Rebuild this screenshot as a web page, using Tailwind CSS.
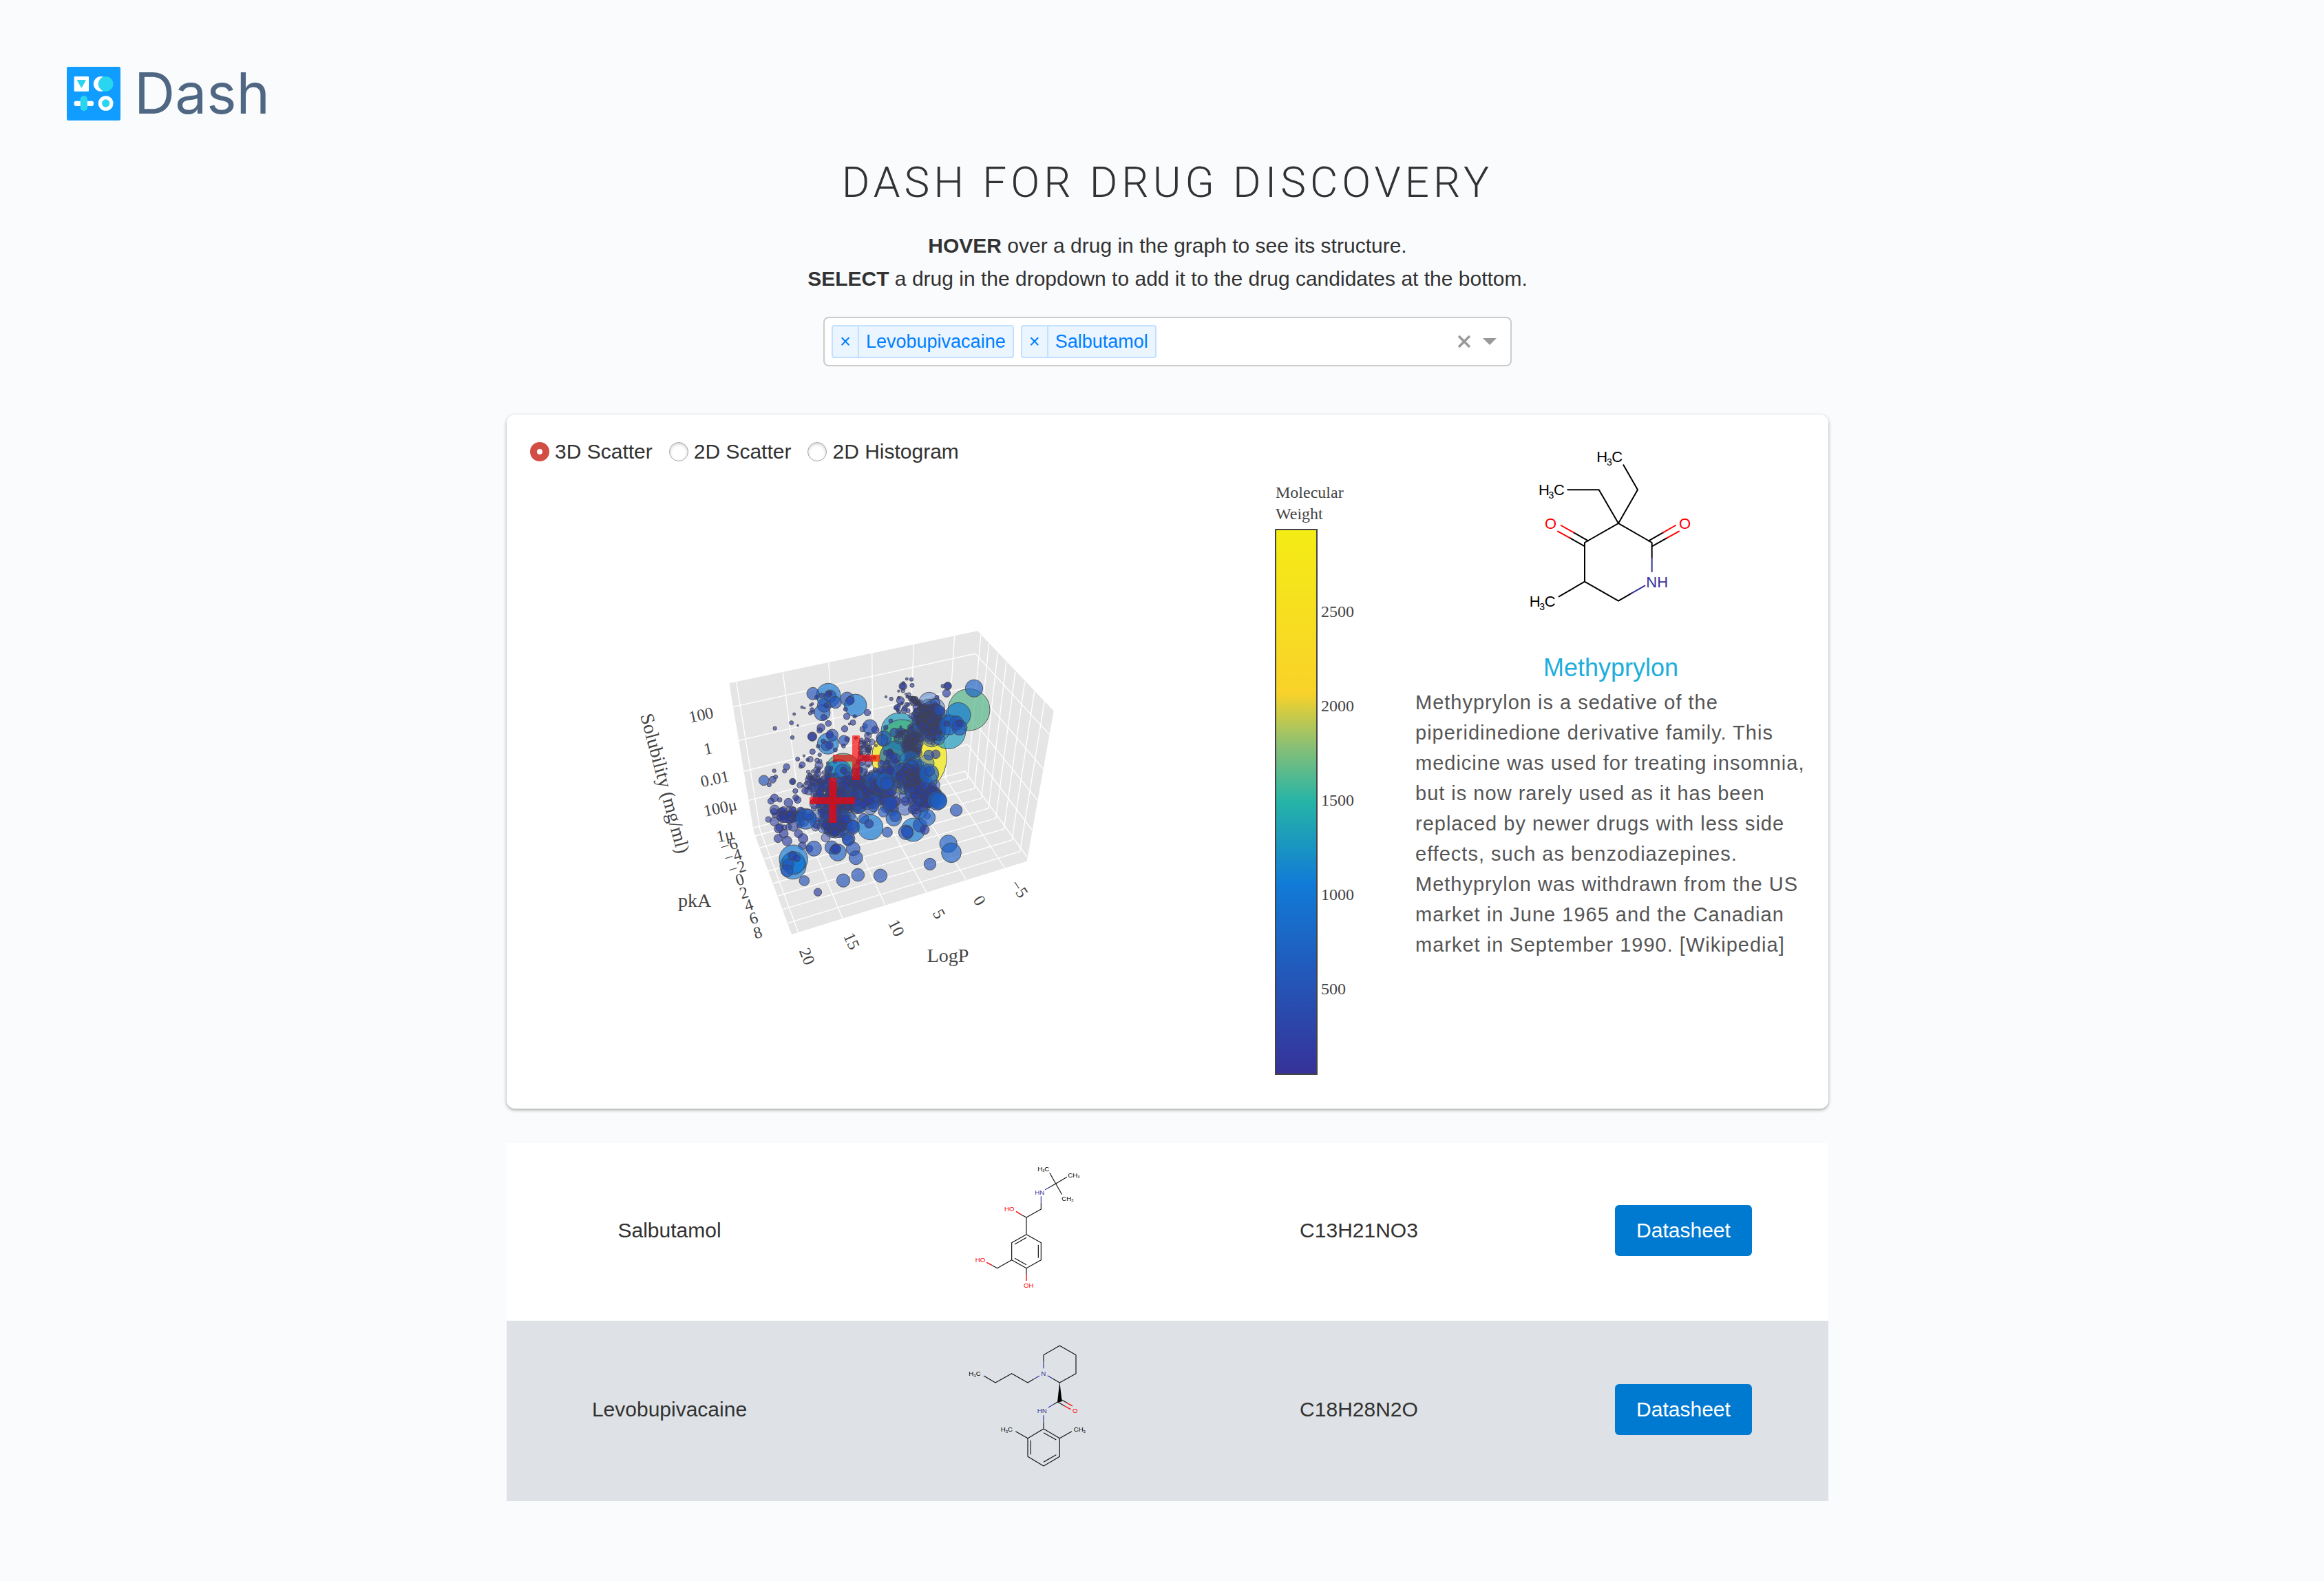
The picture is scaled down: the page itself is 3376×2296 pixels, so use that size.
<!DOCTYPE html>
<html lang="en">
<head>
<meta charset="utf-8">
<meta name="viewport" content="width=device-width, initial-scale=1">
<title>Dash for Drug Discovery</title>
<script src="https://cdn.jsdelivr.net/npm/@tailwindcss/browser@4"></script>
</head>
<body class="min-h-screen bg-[#f9fbfd] pb-28 font-['Liberation_Sans',Arial,sans-serif] text-[30px] leading-[48px] text-[#323232]">

<header class="flex h-[175px] items-end px-[97px]">
  <a href="#" class="flex items-center gap-5" aria-label="Dash home">
    <svg class="h-[78px] w-[78px]" viewBox="51 51 234 234" aria-hidden="true">
      <rect x="51" y="51" width="234" height="234" rx="7" fill="#119dff"/>
      <rect x="83" y="93" width="64" height="65" rx="3" fill="#fff"/>
      <path d="M98 110h34l-17 30z" fill="#2ad5f0" stroke="#2ad5f0" stroke-width="4" stroke-linejoin="round"/>
      <circle cx="200" cy="125.500" r="32.500" fill="#fff"/>
      <circle cx="221" cy="125.500" r="32.500" fill="#2ad5f0"/>
      <rect x="83" y="200" width="85" height="22" rx="8" fill="#fff"/>
      <rect x="110" y="178" width="31" height="65" rx="15" fill="#2ad5f0"/>
      <circle cx="221" cy="210" r="32.500" fill="#fff"/>
      <circle cx="221" cy="210" r="17" fill="#2ad5f0"/>
    </svg>
    <span class="font-[Inter,sans-serif] text-[82px] leading-[78px] text-[#506784]">Dash</span>
  </a>
</header>

<main class="mx-auto w-full max-w-[1936px] pl-4">
  <section class="mt-[50px] text-center">
    <h1 class="font-[Roboto,sans-serif] text-[62px] font-light leading-[80px] tracking-[6px]">DASH FOR DRUG DISCOVERY</h1>
    <p class="mt-7"><strong>HOVER</strong> over a drug in the graph to see its structure.<br><strong>SELECT</strong> a drug in the dropdown to add it to the drug candidates at the bottom.</p>
    <div class="mx-auto mt-[31px] flex h-[72px] w-full max-w-[1000px] items-center rounded-lg border-2 border-[#ccc] bg-white pl-[10px] pr-5 text-[27px]">
      <div class="flex gap-[10px] text-[#007eff]">
        <span class="flex h-[48px] items-center rounded-sm border-2 border-[#c2e0ff] bg-[#ebf5ff]">
          <button type="button" aria-label="Remove Levobupivacaine" class="h-full w-[38px] border-r-2 border-[#c2e0ff] leading-[40px]">×</button><span class="px-[10px]">Levobupivacaine</span>
        </span>
        <span class="flex h-[48px] items-center rounded-sm border-2 border-[#c2e0ff] bg-[#ebf5ff]">
          <button type="button" aria-label="Remove Salbutamol" class="h-full w-[38px] border-r-2 border-[#c2e0ff] leading-[40px]">×</button><span class="px-[10px]">Salbutamol</span>
        </span>
      </div>
      <input type="text" aria-label="Add a drug candidate" class="h-full min-w-0 flex-1 bg-transparent px-3 outline-none">
      <button type="button" aria-label="Clear all" class="mr-[18px]"><svg class="h-[18px] w-[18px]" viewBox="0 0 18 18"><path d="M1 1l16 16M17 1L1 17" stroke="#999" stroke-width="3.500"/></svg></button>
      <button type="button" aria-label="Open list"><svg class="h-[10px] w-[20px]" viewBox="0 0 20 10"><path d="M0 0h20L10 10z" fill="#999"/></svg></button>
    </div>
  </section>

  <section class="mt-[70px] flex rounded-xl bg-white pb-5 pl-[34px] pr-8 pt-[28px] shadow-[0_2px_5px_rgba(0,0,0,0.35)]">
    <div class="mr-[46px] min-w-0 flex-1">
      <div role="radiogroup" aria-label="Chart type" class="mt-[2px] flex gap-6">
        <label class="flex items-center gap-2"><input type="radio" name="chart" checked class="h-7 w-7 appearance-none rounded-full border border-[#aaa] bg-white checked:border-[10px] checked:border-[#d24d43]">3D Scatter</label>
        <label class="flex items-center gap-2"><input type="radio" name="chart" class="h-7 w-7 appearance-none rounded-full border border-[#a4a4a4] bg-white shadow-[inset_0_2px_4px_rgba(0,0,0,0.18)]">2D Scatter</label>
        <label class="flex items-center gap-2"><input type="radio" name="chart" class="h-7 w-7 appearance-none rounded-full border border-[#a4a4a4] bg-white shadow-[inset_0_2px_4px_rgba(0,0,0,0.18)]">2D Histogram</label>
      </div>
      <svg class="mt-[10px] h-auto w-full font-['Liberation_Serif',serif]" viewBox="770 690 1240 900" fill="#444" font-size="24" role="img" aria-label="3D scatter of LogP, pkA and Solubility coloured by molecular weight">
        <defs>
          <linearGradient id="weight" x1="0" y1="0" x2="0" y2="1">
            <stop offset="0" stop-color="rgb(244,236,21)"/><stop offset=".3" stop-color="rgb(249,210,41)"/><stop offset=".4" stop-color="rgb(134,191,118)"/><stop offset=".5" stop-color="rgb(37,180,167)"/><stop offset=".65" stop-color="rgb(17,123,215)"/><stop offset="1" stop-color="rgb(54,50,153)"/>
          </linearGradient>
        </defs>
        <g transform="translate(1080 900) scale(.33333)">
          <path fill="#e5e5e5" d="M-62 277L1020 49L1352 397L1235 1052L210 1371L45 925z"/>
          <g fill="none" stroke="#fff" stroke-width="4">
            <path d="M-31 271L72 915L238 1360M172 229L250 865L432 1302M371 187L421 820L617 1242M560 147L568 772L797 1187M742 108L717 730L970 1132M920 70L880 690L1138 1080"/>
            <path d="M-47 380L1010 148L1333 500M-22 527L1000 290L1307 650M2 660L987 422L1280 785M23 787L977 543L1257 915M43 907L965 660L1235 1032"/>
            <path d="M50 942L977 692L1035 65M70 994L1007 735L1070 103M88 1043L1037 778L1108 145M108 1095L1068 822L1146 184M128 1149L1100 865L1185 228M150 1203L1135 912L1226 270M172 1262L1170 960L1268 312M195 1321L1205 1010L1312 355"/>
          </g>
          <g id="drugs" stroke="#444" stroke-width="2.500"></g>
          <g fill="#ff0000" fill-opacity=".65">
            <path d="M474 508q0-4 4-4h25q4 0 4 4v80h82q4 0 4 4v22q0 4-4 4h-82v77q0 4-4 4h-25q-4 0-4-4v-77h-80q-4 0-4-4v-22q0-4 4-4h80z"/>
            <path fill-opacity=".7" d="M372 693q0-4 4-4h26q4 0 4 4v80h76q4 0 4 4v22q0 4-4 4h-76v78q0 4-4 4h-26q-4 0-4-4v-78h-80q-4 0-4-4v-22q0-4 4-4h80z"/>
          </g>
        </g>
        <g text-anchor="middle">
          <g>
            <text transform="translate(1020 1046) rotate(-12)">100</text>
            <text transform="translate(1030 1095) rotate(-12)">1</text>
            <text transform="translate(1040 1139) rotate(-12)">0.01</text>
            <text transform="translate(1048 1181) rotate(-12)">100μ</text>
            <text transform="translate(1055 1221) rotate(-12)">1μ</text>
            <text transform="translate(1061 1235) rotate(-17)">−6</text>
            <text transform="translate(1067 1251) rotate(-17)">−4</text>
            <text transform="translate(1073 1268) rotate(-17)">−2</text>
            <text transform="translate(1077 1285) rotate(-17)">0</text>
            <text transform="translate(1083 1304) rotate(-17)">2</text>
            <text transform="translate(1090 1322) rotate(-17)">4</text>
            <text transform="translate(1097 1341) rotate(-17)">6</text>
            <text transform="translate(1103 1362) rotate(-17)">8</text>
            <text transform="translate(1165 1392) rotate(68)">20</text>
            <text transform="translate(1230 1370) rotate(66)">15</text>
            <text transform="translate(1295 1351) rotate(64)">10</text>
            <text transform="translate(1357 1331) rotate(62)">5</text>
            <text transform="translate(1416 1312) rotate(59)">0</text>
            <text transform="translate(1474 1295) rotate(56)">−5</text>
          </g>
          <g font-size="28">
            <text transform="translate(957 1140) rotate(75)">Solubility (mg/ml)</text>
            <text x="1009" y="1317">pkA</text>
            <text x="1377" y="1397">LogP</text>
          </g>
        </g>
        <text x="1853" y="723">Molecular</text><text x="1853" y="754">Weight</text>
        <rect x="1853" y="769" width="60" height="791" fill="url(#weight)" stroke="#444" stroke-width="2"/>
        <text x="1919" y="896">2500</text><text x="1919" y="1033">2000</text><text x="1919" y="1170">1500</text><text x="1919" y="1307">1000</text><text x="1919" y="1444">500</text>
      </svg>
    </div>

    <article class="w-[568px] shrink-0">
      <svg class="mx-auto h-[316px] w-[360px]" viewBox="0 0 1080 948" role="img" aria-label="Structure of Methyprylon" font-size="66">
        <g fill="none" stroke="#000" stroke-width="6" stroke-linecap="round" stroke-linejoin="round">
          <path d="M595 136L657 244L573 390L488 244H352M573 390L719 474V540M573 390L426 474V644L573 728L630 695M426 644L314 709"/>
          <path d="M441 466L378 430M426 490L362 454M705 466L768 430M720 490L784 454"/>
          <path stroke="#f00" d="M378 430L323 399M362 454L309 425M768 430L822 399M784 454L837 425"/>
          <path stroke="#333399" d="M719 540V601M630 695L688 662"/>
        </g>
        <text x="478" y="122">H<tspan font-size="42" dy="15" dx="-4">3</tspan><tspan dy="-15" dx="-1">C</tspan></text>
        <text x="225" y="268">H<tspan font-size="42" dy="15" dx="-4">3</tspan><tspan dy="-15" dx="-1">C</tspan></text>
        <text x="185" y="753">H<tspan font-size="42" dy="15" dx="-4">3</tspan><tspan dy="-15" dx="-1">C</tspan></text>
        <g fill="#f00" text-anchor="middle"><text x="278" y="413">O</text><text x="863" y="413">O</text></g>
        <text x="694" y="668" fill="#333399">NH</text>
      </svg>
      <h2 class="text-center text-[36px]"><a href="#" class="text-[#1eaedb]">Methyprylon</a></h2>
      <p class="mt-1 text-[29px] leading-[44px] tracking-[1px] text-[#555]">Methyprylon is a sedative of the piperidinedione derivative family. This medicine was used for treating insomnia, but is now rarely used as it has been replaced by newer drugs with less side effects, such as benzodiazepines. Methyprylon was withdrawn from the US market in June 1965 and the Canadian market in September 1990. [Wikipedia]</p>
    </article>
  </section>

  <table class="mt-[50px] w-full table-fixed text-center">
    <colgroup><col class="w-[473px]"><col class="w-[504px]"><col class="w-[522px]"><col class="w-[421px]"></colgroup>
    <tbody>
      <tr class="h-[258px] bg-white">
        <td class="pb-1">Salbutamol</td>
        <td>
          <svg class="mx-auto h-[218px] w-[280px]" viewBox="-177 0 840 654" role="img" aria-label="Structure of Salbutamol" font-size="29">
            <g fill="none" stroke="#111" stroke-width="3.500" stroke-linejoin="round">
              <path d="M434 69L461 117L488 164M461 117L510 88M461 117L436 131M397 200V228L333 264L309 251M333 264V338L397 374V449L333 485L269 449V374L333 338M385 383V440M282 381L333 352M282 442L333 470M269 449L206 485L184 473M333 485V512"/>
              <path stroke="#333399" d="M436 131L414 143M397 172V200"/>
              <path stroke="#e00" stroke-width="4" d="M309 251L288 238M184 473L160 460M333 512V540"/>
            </g>
            <text x="382" y="63">H<tspan font-size="16" dy="4">3</tspan><tspan dy="-4">C</tspan></text>
            <text x="514" y="90">CH<tspan font-size="16" dy="4">3</tspan></text>
            <text x="487" y="192">CH<tspan font-size="16" dy="4">3</tspan></text>
            <text x="370" y="165" fill="#333399">HN</text>
            <g fill="#f00"><text x="237" y="238">HO</text><text x="110" y="460">HO</text><text x="321" y="570">OH</text></g>
          </svg>
        </td>
        <td class="pb-1">C13H21NO3</td>
        <td class="pb-1"><a href="#" class="inline-block rounded-md bg-[#007ad1] px-[31px] py-[13px] text-white">Datasheet</a></td>
      </tr>
      <tr class="h-[262px] bg-[#dee2e6]">
        <td class="pb-1">Levobupivacaine</td>
        <td>
          <svg class="mx-auto h-[218px] w-[280px]" viewBox="-177 0 840 654" role="img" aria-label="Structure of Levobupivacaine" font-size="29">
            <g fill="none" stroke="#111" stroke-width="3.500" stroke-linejoin="round">
              <path d="M147 174L198 204L269 164L339 204L364 189M408 112V83L478 43L549 83V164L478 204L447 186M478 283L454 297M486 278L510 292M470 288L500 306M408 377V405L478 446V526L408 567L339 526V446L408 405M352 455V517M408 422L463 453M408 550L463 518M339 446L286 416M478 446L531 416"/>
              <path fill="#000" stroke="none" d="M478 200L488 286L468 290z"/>
              <path stroke="#333399" d="M364 189L390 174M408 142V112M447 186L425 173M454 297L429 312M408 346V377"/>
              <path stroke="#f00" stroke-width="4" d="M510 292L534 306M500 306L526 320"/>
            </g>
            <text x="82" y="174">H<tspan font-size="18" dy="6">3</tspan><tspan dy="-6">C</tspan></text>
            <text x="221" y="417">H<tspan font-size="18" dy="6">3</tspan><tspan dy="-6">C</tspan></text>
            <text x="539" y="417">CH<tspan font-size="18" dy="6">3</tspan></text>
            <g fill="#333399"><text x="397" y="174">N</text><text x="380" y="336">HN</text></g>
            <text x="534" y="336" fill="#f00">O</text>
          </svg>
        </td>
        <td class="pb-1">C18H28N2O</td>
        <td class="pb-1"><a href="#" class="inline-block rounded-md bg-[#007ad1] px-[31px] py-[13px] text-white">Datasheet</a></td>
      </tr>
    </tbody>
  </table>
</main>

<script>
(function () {
  var layer = document.getElementById('drugs');
  function dot(x, y, r, color, alpha) {
    var c = document.createElementNS('http://www.w3.org/2000/svg', 'circle');
    c.setAttribute('cx', x.toFixed(1));
    c.setAttribute('cy', y.toFixed(1));
    c.setAttribute('r', r.toFixed(1));
    c.setAttribute('fill', color);
    c.setAttribute('fill-opacity', alpha);
    layer.appendChild(c);
  }
  // colour follows weight, and so does the marker size
  function shade(r) {
    if (r < 22) return '#2c3ca4';
    if (r < 34) return '#2350b8';
    if (r < 46) return '#1c60c6';
    return '#1176d4';
  }
  [[723,600,163,'#f4ec15'],[983,392,91,'#5cb98d'],[680,485,80,'#259fc0'],[690,525,90,'#42b48c'],[893,488,75,'#259fc0'],
   [435,660,78,'#42b48c'],[665,600,72,'#1f6fae'],[415,665,56,'#117bd7']].forEach(function (d) { dot(d[0], d[1], d[2], d[3], 0.72); });

  var seed = 7;
  function rnd() { seed = (seed * 16807) % 2147483647; return seed / 2147483647; }
  function gauss() { return (rnd() + rnd() + rnd() - 1.5) * 1.35; }
  // x, y, spread x, spread y, smallest and largest radius, count, slant, fill opacity
  [[330,690,48,46,7,20,70,0,0.55],[520,735,84,50,10,34,150,0,0.5],[400,790,68,60,10,30,130,0,0.5],[535,560,26,56,6,16,45,0,0.55],
   [220,862,66,32,11,23,48,0,0.6],[385,890,46,34,16,46,60,0,0.45],[612,715,44,40,12,42,36,0,0.5],[610,800,80,26,18,32,22,0,0.6],
   [812,450,34,48,6,50,190,0,0.4],[765,370,40,12,4,12,90,2.6,0.5],[738,550,24,54,6,20,130,0,0.45],[735,690,38,40,8,48,140,0,0.4],
   [795,775,50,50,14,40,60,0,0.5],[690,490,24,22,5,20,14,0,0.6],[645,620,34,40,10,28,14,0,0.5],[700,385,40,20,5,14,14,0,0.6],
   [715,515,30,20,8,20,30,0,0.25],[790,420,36,30,4,14,90,0,0.5]
  ].forEach(function (k) {
    var dots = [];
    for (var i = 0; i < k[6]; i++) {
      var gx = gauss(), t = rnd();
      dots.push([k[0] + gx * k[2], k[1] + (gauss() + gx * k[7]) * k[3], k[4] + (k[5] - k[4]) * t * t]);
    }
    dots.sort(function (a, b) { return b[2] - a[2]; });
    dots.forEach(function (d) { dot(d[0], d[1], d[2], shade(d[2]), k[8]); });
  });

  [[370,330,53],[303,322,27],[343,405,35],[352,373,30],[378,333,27],[401,360,26],[452,345,30],[488,373,49],[465,352,18],[370,325,14],[341,330,11],[378,320,9],[319,338,9],[361,373,10],
   [300,367,6],[255,381,6],[266,385,4],[299,392,9],[291,407,8],[302,402,8],[293,372,6],[221,411,6],[350,425,13],[209,449,9],[237,461,4],[137,473,8],[213,513,8],[450,421,14],[485,421,8],[445,390,9],[540,405,14],[477,448,12],[462,454,5],
   [338,470,17],[370,452,13],[332,482,12],[441,475,14],[551,467,32],[575,480,16],[300,509,20],[299,510,17],[368,540,46],[387,503,26],[376,500,16],[361,550,22],[374,547,17],[348,529,10],[325,551,8],[437,526,22],[452,520,11],[436,550,9],[400,567,9],
   [301,575,12],[332,588,8],[264,593,5],[236,607,9],[280,610,7],[256,632,13],[188,641,14],[179,659,9],[134,658,8],[89,700,22],[127,697,15],[140,685,9],[112,719,9],[214,705,14],[215,706,10],[258,725,5],[226,746,11],[268,745,14],
   [135,776,17],[120,790,14],[158,785,10],[196,797,19],[228,775,13],[236,785,15],[133,837,15],[160,842,11],[165,860,17],[180,865,19],[200,846,15],[200,848,14],[272,868,45],[280,850,25],[153,910,19],[158,905,17],[176,932,19],[151,953,18],[190,964,21],[240,932,18],[260,953,21],[256,985,17],[287,997,16],[307,997,33],
   [216,1073,57],[218,1043,62],[218,1060,50],[196,1066,24],[190,1094,26],[214,1028,19],[232,1039,16],[265,1137,22],[324,1187,17],[435,1136,29],[499,1112,28],[597,1115,29],[384,992,29],[411,1014,37],[401,1000,22],[404,998,20],[458,955,28],[456,961,24],[478,998,30],[490,1037,30],[476,905,30],[478,900,27],[445,870,20],
   [553,904,55],[547,889,19],[524,866,22],[627,926,22],[655,865,34],[661,856,24],[610,838,22],[640,800,30],[706,790,19],[740,915,51],[708,926,32],[714,925,25],[769,895,30],[800,862,36],[790,915,20],[844,788,42],[850,790,36],[927,830,26],[893,976,38],[906,1015,43],[813,1065,26],
   [853,395,22],[843,338,9],[869,289,8],[890,289,17],[891,287,14],[885,320,17],[1005,299,38],[936,415,54],[895,460,42],[928,450,31],[942,470,33],[940,452,14],[886,453,12],
   [695,290,17],[694,290,12],[712,258,6],[732,260,8],[735,286,9],[697,276,7],[621,336,5],[644,345,8],[684,352,17],[676,311,5],[670,382,13],[676,340,6],[642,441,9],[612,517,33],[605,525,25],[620,470,10],
   [808,590,22],[838,586,19],[808,672,43],[811,660,22],[616,705,38],[625,715,28],[640,657,17],[622,580,12],[640,590,15],[602,628,16],[600,655,17],[574,654,10]
  ].forEach(function (d) { dot(d[0], d[1], d[2], shade(d[2]), 0.66); });
})();
</script>
</body>
</html>
